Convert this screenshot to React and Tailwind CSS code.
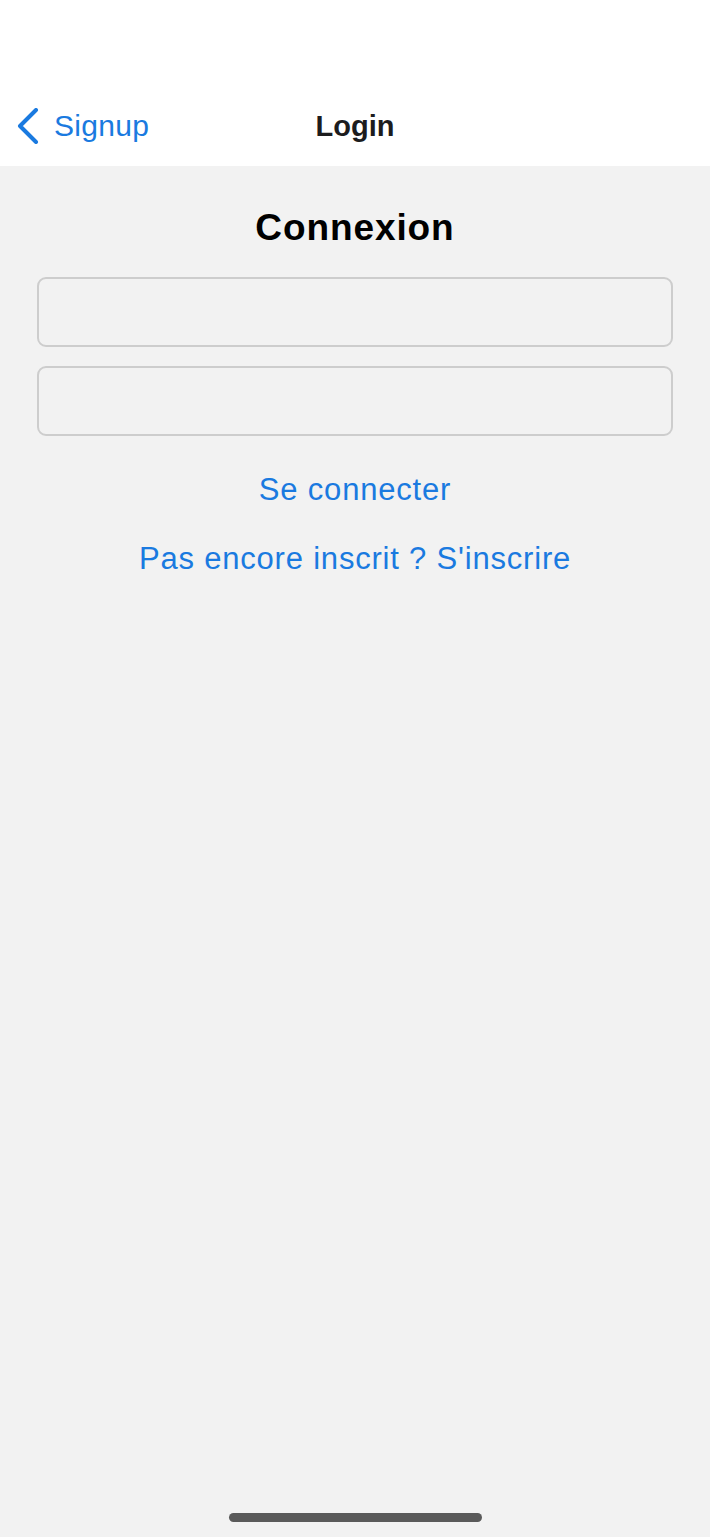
export default function App() {
  return (
    <div className="w-[710px] h-[1537px] flex flex-col bg-[#f2f2f2]" style={{ fontFamily: '"Liberation Sans", Arial, sans-serif' }}>
      <div className="h-[166px] bg-white flex flex-col justify-end shrink-0">
        <div className="relative h-[80px] flex items-center">
          <div className="flex items-center pl-[16px] gap-[14px] text-[#1a7ae0]">
            <svg width="24" height="36" viewBox="0 0 24 36" fill="none">
              <path d="M20 2 L4 18 L20 34" stroke="#1a7ae0" strokeWidth="4" strokeLinecap="round" strokeLinejoin="round" />
            </svg>
            <span className="text-[30px] leading-none tracking-[0.3px]">Signup</span>
          </div>
          <div className="absolute left-0 right-0 text-center text-[29px] font-bold text-[#1c1c1e] leading-none pointer-events-none">Login</div>
        </div>
      </div>
      <div className="flex flex-col items-center px-[37px]">
        <h1 className="mt-[40px] text-[37px] font-bold text-black leading-[44px] tracking-[0.9px]">Connexion</h1>
        <div className="mt-[27px] w-full h-[70px] rounded-[9px] border-2 border-[#cdcdcd] bg-[#f2f2f2]" />
        <div className="mt-[19px] w-full h-[70px] rounded-[9px] border-2 border-[#cdcdcd] bg-[#f2f2f2]" />
        <div className="mt-[34px] text-[31px] text-[#1a7ae0] leading-[40px] tracking-[0.8px]">Se connecter</div>
        <div className="mt-[29px] text-[31px] text-[#1a7ae0] leading-[40px] tracking-[0.8px]">Pas encore inscrit ? S'inscrire</div>
      </div>
      <div className="flex-1" />
      <div className="flex justify-center pb-[15px]">
        <div className="w-[253px] h-[9px] rounded-full bg-[#5a5a5a]" />
      </div>
    </div>
  );
}
